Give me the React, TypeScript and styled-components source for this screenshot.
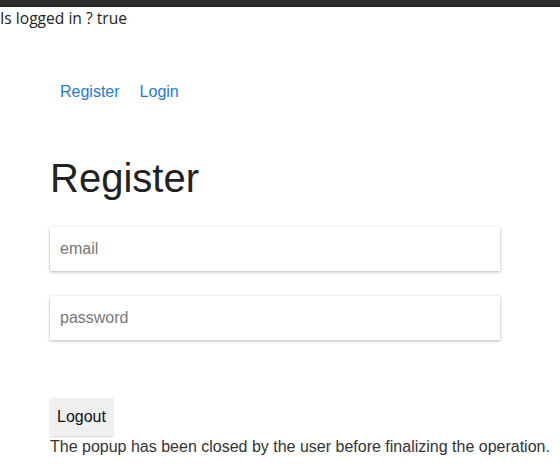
import React from "react";
import styled, { createGlobalStyle } from "styled-components";

const Global = createGlobalStyle`
  html, body { margin: 0; padding: 0; background: #ffffff; }
  body { font-family: "Liberation Sans", Arial, sans-serif; }
`;

const TopBar = styled.div`
  height: 6px;
  background: #2d2d2d;
  border-bottom: 1px solid #1c1c1c;
`;

const Status = styled.div`
  font-family: "Open Sans", "Noto Sans", sans-serif;
  font-size: 15.6px;
  line-height: 21px;
  color: #222;
  padding-top: 1px;
`;

const Page = styled.div`
  padding-left: 50px;
  width: 450px;
`;

const Nav = styled.nav`
  display: flex;
  gap: 20px;
  padding: 54px 10px 0;
`;

const NavLink = styled.a`
  font-size: 16px;
  line-height: 18px;
  color: #1f7ad6;
  text-decoration: none;
`;

const Heading = styled.h1`
  margin: 54px 0 0;
  font-size: 40px;
  font-weight: 400;
  line-height: 46px;
  color: #222;
`;

const Form = styled.form`
  display: flex;
  flex-direction: column;
  gap: 25px;
  margin-top: 26px;
`;

const Input = styled.input`
  height: 44px;
  box-sizing: border-box;
  border: none;
  outline: none;
  padding: 0 10px;
  font-family: "Liberation Sans", Arial, sans-serif;
  font-size: 16px;
  color: #222;
  background: #fff;
  box-shadow: 0 1px 3px rgba(0, 0, 0, 0.28), 0 0 1px rgba(0, 0, 0, 0.08);
  &::placeholder { color: #777; }
`;

const Button = styled.button`
  margin-top: 58px;
  align-self: flex-start;
  padding: 10px 7px;
  border: none;
  background: #efefef;
  font-family: "Liberation Sans", Arial, sans-serif;
  font-size: 16px;
  line-height: 18px;
  color: #111;
  box-shadow: 0 1px 2px rgba(0, 0, 0, 0.18);
  cursor: pointer;
`;

const Message = styled.div`
  margin-top: 2px;
  font-size: 16px;
  line-height: 18px;
  color: #333;
  white-space: nowrap;
`;

const Column = styled.div`
  display: flex;
  flex-direction: column;
`;

export default function App() {
  return (
    <>
      <Global />
      <TopBar />
      <Status>Is logged in ? true</Status>
      <Page>
        <Nav>
          <NavLink href="#">Register</NavLink>
          <NavLink href="#">Login</NavLink>
        </Nav>
        <Heading>Register</Heading>
        <Column>
          <Form onSubmit={(e) => e.preventDefault()}>
            <Input type="text" placeholder="email" />
            <Input type="password" placeholder="password" />
          </Form>
          <Button type="button">Logout</Button>
          <Message>The popup has been closed by the user before finalizing the operation.</Message>
        </Column>
      </Page>
    </>
  );
}
